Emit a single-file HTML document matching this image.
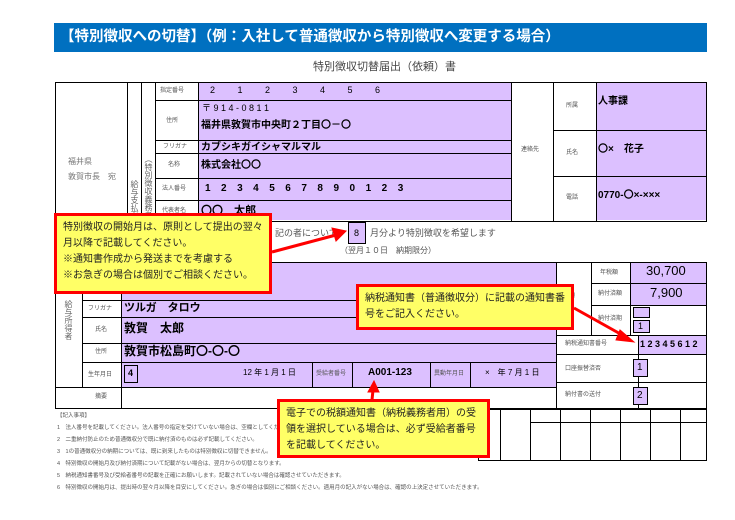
<!DOCTYPE html>
<html><head><meta charset="utf-8"><style>
*{margin:0;padding:0;box-sizing:border-box}
body{width:735px;height:520px;background:#fff;position:relative;overflow:hidden;font-family:"Liberation Sans","Noto Sans CJK JP",sans-serif;color:#000}
.a{position:absolute}
.p{position:absolute;background:#dcc0ff}
.b{position:absolute;border:1px solid #000}
.h{position:absolute;height:0;border-top:1px solid #000}
.v{position:absolute;width:0;border-left:1px solid #000}
.t{position:absolute;white-space:nowrap;line-height:1}
.s{font-size:6px;color:#555}
.vt{writing-mode:vertical-rl;font-size:8px;color:#666;line-height:1}
.call{position:absolute;background:#ffff66;border:3px solid #f00;font-size:10px;line-height:16px;padding:4px 6px;color:#222}
</style></head><body>
<div class="a" style="left:54px;top:23px;width:653px;height:29px;background:#0070c0"></div>
<div class="t" style="left:60px;top:30px;color:#fff;font-size:14.5px;font-weight:bold">【特別徴収への切替】（例：入社して普通徴収から特別徴収へ変更する場合）</div>
<div class="t" style="left:313px;top:62px;font-size:11px;color:#444">特別徴収切替届出（依頼）書</div>

<!-- top table -->
<div class="p" style="left:198px;top:82px;width:313px;height:138px"></div>
<div class="p" style="left:596px;top:82px;width:111px;height:138px"></div>
<div class="b" style="left:55px;top:82px;width:652px;height:140px"></div>
<div class="v" style="left:127px;top:82px;height:140px"></div>
<div class="v" style="left:141px;top:82px;height:140px"></div>
<div class="v" style="left:155px;top:82px;height:140px"></div>
<div class="v" style="left:198px;top:82px;height:140px"></div>
<div class="v" style="left:511px;top:82px;height:140px"></div>
<div class="v" style="left:553px;top:82px;height:140px"></div>
<div class="v" style="left:596px;top:82px;height:140px"></div>
<div class="h" style="left:155px;top:100px;width:356px"></div>
<div class="h" style="left:155px;top:140px;width:356px"></div>
<div class="h" style="left:155px;top:153px;width:356px"></div>
<div class="h" style="left:155px;top:178px;width:356px"></div>
<div class="h" style="left:155px;top:200px;width:356px"></div>
<div class="h" style="left:553px;top:130px;width:154px"></div>
<div class="h" style="left:553px;top:176px;width:154px"></div>
<div class="t" style="left:68px;top:154px;font-size:8px;color:#777;line-height:15px">福井県<br>敦賀市長　宛</div>
<div class="t vt" style="left:130px;top:180px">給与支払者</div>
<div class="t vt" style="left:144px;top:155px">（特別徴収義務者）</div>
<div class="t s" style="left:160px;top:88px">指定番号</div>
<div class="t s" style="left:166px;top:118px">住所</div>
<div class="t s" style="left:163px;top:144px">フリガナ</div>
<div class="t s" style="left:168px;top:162px">名称</div>
<div class="t s" style="left:162px;top:186px">法人番号</div>
<div class="t s" style="left:162px;top:208px">代表者名</div>
<div class="t" style="left:210px;top:86px;font-size:9px;word-spacing:20px">2 1 2 3 4 5 6</div>
<div class="t" style="left:202px;top:104px;font-size:9px">〒 9 1 4 - 0 8 1 1</div>
<div class="t" style="left:201px;top:121px;font-size:10px;font-weight:bold">福井県敦賀市中央町２丁目〇－〇</div>
<div class="t" style="left:201px;top:143px;font-size:10px;font-weight:bold">カブシキガイシャマルマル</div>
<div class="t" style="left:201px;top:161px;font-size:10px;font-weight:bold">株式会社〇〇</div>
<div class="t" style="left:205px;top:184px;font-size:10px;font-weight:bold;letter-spacing:10.5px">1234567890123</div>
<div class="t" style="left:201px;top:206px;font-size:11px;font-weight:bold">〇〇　太郎</div>
<div class="t s" style="left:521px;top:147px">連絡先</div>
<div class="t s" style="left:566px;top:103px">所属</div>
<div class="t s" style="left:566px;top:150px">氏名</div>
<div class="t s" style="left:566px;top:195px">電話</div>
<div class="t" style="left:598px;top:97px;font-size:10px;font-weight:bold">人事課</div>
<div class="t" style="left:598px;top:145px;font-size:10px;font-weight:bold">〇×　花子</div>
<div class="t" style="left:598px;top:191px;font-size:10px;font-weight:bold">0770-〇×-×××</div>

<div class="b" style="left:348px;top:222px;width:18px;height:22px;background:#dcc0ff"></div>
<div class="t" style="left:354px;top:229px;font-size:9px">8</div>
<div class="t" style="left:275px;top:229px;font-size:9px;color:#555">記の者について、</div>
<div class="t" style="left:370px;top:229px;font-size:9px;color:#555">月分より特別徴収を希望します</div>
<div class="t" style="left:340px;top:247px;font-size:8px;color:#555">（翌月１０日　納期限分）</div>

<!-- lower table -->
<div class="p" style="left:121px;top:262px;width:435px;height:125px"></div>
<div class="p" style="left:630px;top:262px;width:77px;height:43px"></div>
<div class="p" style="left:638px;top:335px;width:69px;height:19px"></div>
<div class="b" style="left:55px;top:262px;width:652px;height:147px"></div>
<div class="v" style="left:82px;top:262px;height:125px"></div>
<div class="v" style="left:121px;top:262px;height:147px"></div>
<div class="v" style="left:556px;top:262px;height:147px"></div>
<div class="h" style="left:82px;top:300px;width:474px"></div>
<div class="h" style="left:82px;top:317px;width:474px"></div>
<div class="h" style="left:82px;top:343px;width:474px"></div>
<div class="h" style="left:82px;top:362px;width:474px"></div>
<div class="h" style="left:55px;top:387px;width:501px"></div>
<div class="v" style="left:591px;top:262px;height:73px"></div>
<div class="v" style="left:630px;top:262px;height:73px"></div>
<div class="v" style="left:638px;top:335px;height:74px"></div>
<div class="h" style="left:591px;top:283px;width:116px"></div>
<div class="h" style="left:591px;top:305px;width:116px"></div>
<div class="h" style="left:556px;top:335px;width:151px"></div>
<div class="h" style="left:556px;top:354px;width:151px"></div>
<div class="h" style="left:556px;top:382px;width:151px"></div>
<div class="t vt" style="left:64px;top:300px">給与所得者</div>
<div class="t s" style="left:88px;top:306px">フリガナ</div>
<div class="t s" style="left:95px;top:327px">氏名</div>
<div class="t s" style="left:95px;top:349px">住所</div>
<div class="t s" style="left:88px;top:372px">生年月日</div>
<div class="t s" style="left:95px;top:394px">摘要</div>
<div class="t" style="left:124px;top:303px;font-size:11px;font-weight:bold">ツルガ　タロウ</div>
<div class="t" style="left:124px;top:322px;font-size:12px;font-weight:bold">敦賀　太郎</div>
<div class="t" style="left:124px;top:345px;font-size:12px;font-weight:bold">敦賀市松島町〇-〇-〇</div>
<div class="b" style="left:124px;top:365px;width:14px;height:18px"></div>
<div class="t" style="left:128px;top:369px;font-size:9px;font-weight:bold">4</div>
<div class="t" style="left:243px;top:369px;font-size:8px">12 年 1 月 1 日</div>
<div class="v" style="left:312px;top:362px;height:25px"></div>
<div class="v" style="left:352px;top:362px;height:25px"></div>
<div class="v" style="left:430px;top:362px;height:25px"></div>
<div class="v" style="left:470px;top:362px;height:25px"></div>
<div class="t s" style="left:316px;top:371px">受給者番号</div>
<div class="t" style="left:368px;top:368px;font-size:10px;font-weight:bold">A001-123</div>
<div class="t s" style="left:434px;top:371px">異動年月日</div>
<div class="t" style="left:485px;top:369px;font-size:8px">×　年 7 月 1 日</div>
<div class="t s" style="left:563px;top:293px">税額</div>
<div class="t s" style="left:600px;top:270px">年税額</div>
<div class="t s" style="left:598px;top:291px">納付済額</div>
<div class="t s" style="left:598px;top:316px">納付済期</div>
<div class="t" style="left:646px;top:264px;font-size:13px">30,700</div>
<div class="t" style="left:650px;top:286px;font-size:13px">7,900</div>
<div class="b" style="left:633px;top:307px;width:17px;height:11px;background:#dcc0ff"></div>
<div class="b" style="left:633px;top:320px;width:17px;height:13px;background:#dcc0ff"></div>
<div class="t" style="left:638px;top:322px;font-size:9px">1</div>
<div class="t s" style="left:565px;top:341px">納税通知書番号</div>
<div class="t" style="left:640px;top:340px;font-size:9px;font-weight:bold;letter-spacing:2.5px">12345612</div>
<div class="t s" style="left:565px;top:366px">口座振替済否</div>
<div class="t s" style="left:565px;top:392px">納付書の送付</div>
<div class="b" style="left:633px;top:359px;width:15px;height:18px;background:#dcc0ff"></div>
<div class="t" style="left:637px;top:363px;font-size:10px">1</div>
<div class="b" style="left:633px;top:387px;width:15px;height:18px;background:#dcc0ff"></div>
<div class="t" style="left:637px;top:391px;font-size:10px">2</div>

<!-- notes -->
<div class="t" style="left:57px;top:410px;font-size:5.5px;color:#555;line-height:12px">【記入事項】<br>1　法人番号を記載してください。法人番号の指定を受けていない場合は、空欄としてください。<br>2　二重納付防止のため普通徴収分で既に納付済のものは必ず記載してください。<br>3　1の普通徴収分の納期については、既に到来したものは特別徴収に切替できません。<br>4　特別徴収の開始月及び納付済期について記載がない場合は、翌月からの切替となります。<br>5　納税通知書番号及び受給者番号の記載を正確にお願いします。記載されていない場合は確認させていただきます。<br>6　特別徴収の開始月は、提出時の翌々月以降を目安にしてください。急ぎの場合は個別にご相談ください。適用月の記入がない場合は、確認の上決定させていただきます。</div>
<div class="b" style="left:478px;top:409px;width:229px;height:52px"></div>
<div class="v" style="left:500px;top:409px;height:52px"></div>
<div class="v" style="left:530px;top:409px;height:52px"></div>
<div class="h" style="left:530px;top:422px;width:177px"></div>
<div class="v" style="left:560px;top:409px;height:52px"></div>
<div class="v" style="left:590px;top:409px;height:52px"></div>
<div class="v" style="left:620px;top:409px;height:52px"></div>
<div class="v" style="left:650px;top:409px;height:52px"></div>
<div class="v" style="left:680px;top:409px;height:52px"></div>

<!-- arrows -->
<svg class="a" style="left:0;top:0" width="735" height="520">
<g stroke="#f00" stroke-width="3" fill="#f00">
<line x1="272" y1="252" x2="336" y2="235"/><polygon points="346,231 332,228 336,241" stroke-width="1"/>
<line x1="574" y1="308" x2="624" y2="336"/><polygon points="634,342 620,330 616,340" stroke-width="1"/>
<line x1="372" y1="400" x2="373" y2="390"/><polygon points="374,381 368,392 379,392" stroke-width="1"/>
</g></svg>

<div class="call" style="left:54px;top:213px;width:218px;height:81px">特別徴収の開始月は、原則として提出の翌々月以降で記載してください。<br>※通知書作成から発送までを考慮する<br>※お急ぎの場合は個別でご相談ください。</div>
<div class="call" style="left:356px;top:284px;width:218px;height:46px">納税通知書（普通徴収分）に記載の通知書番号をご記入ください。</div>
<div class="call" style="left:277px;top:399px;width:213px;height:59px">電子での税額通知書（納税義務者用）の受領を選択している場合は、必ず受給者番号を記載してください。</div>
</body></html>
